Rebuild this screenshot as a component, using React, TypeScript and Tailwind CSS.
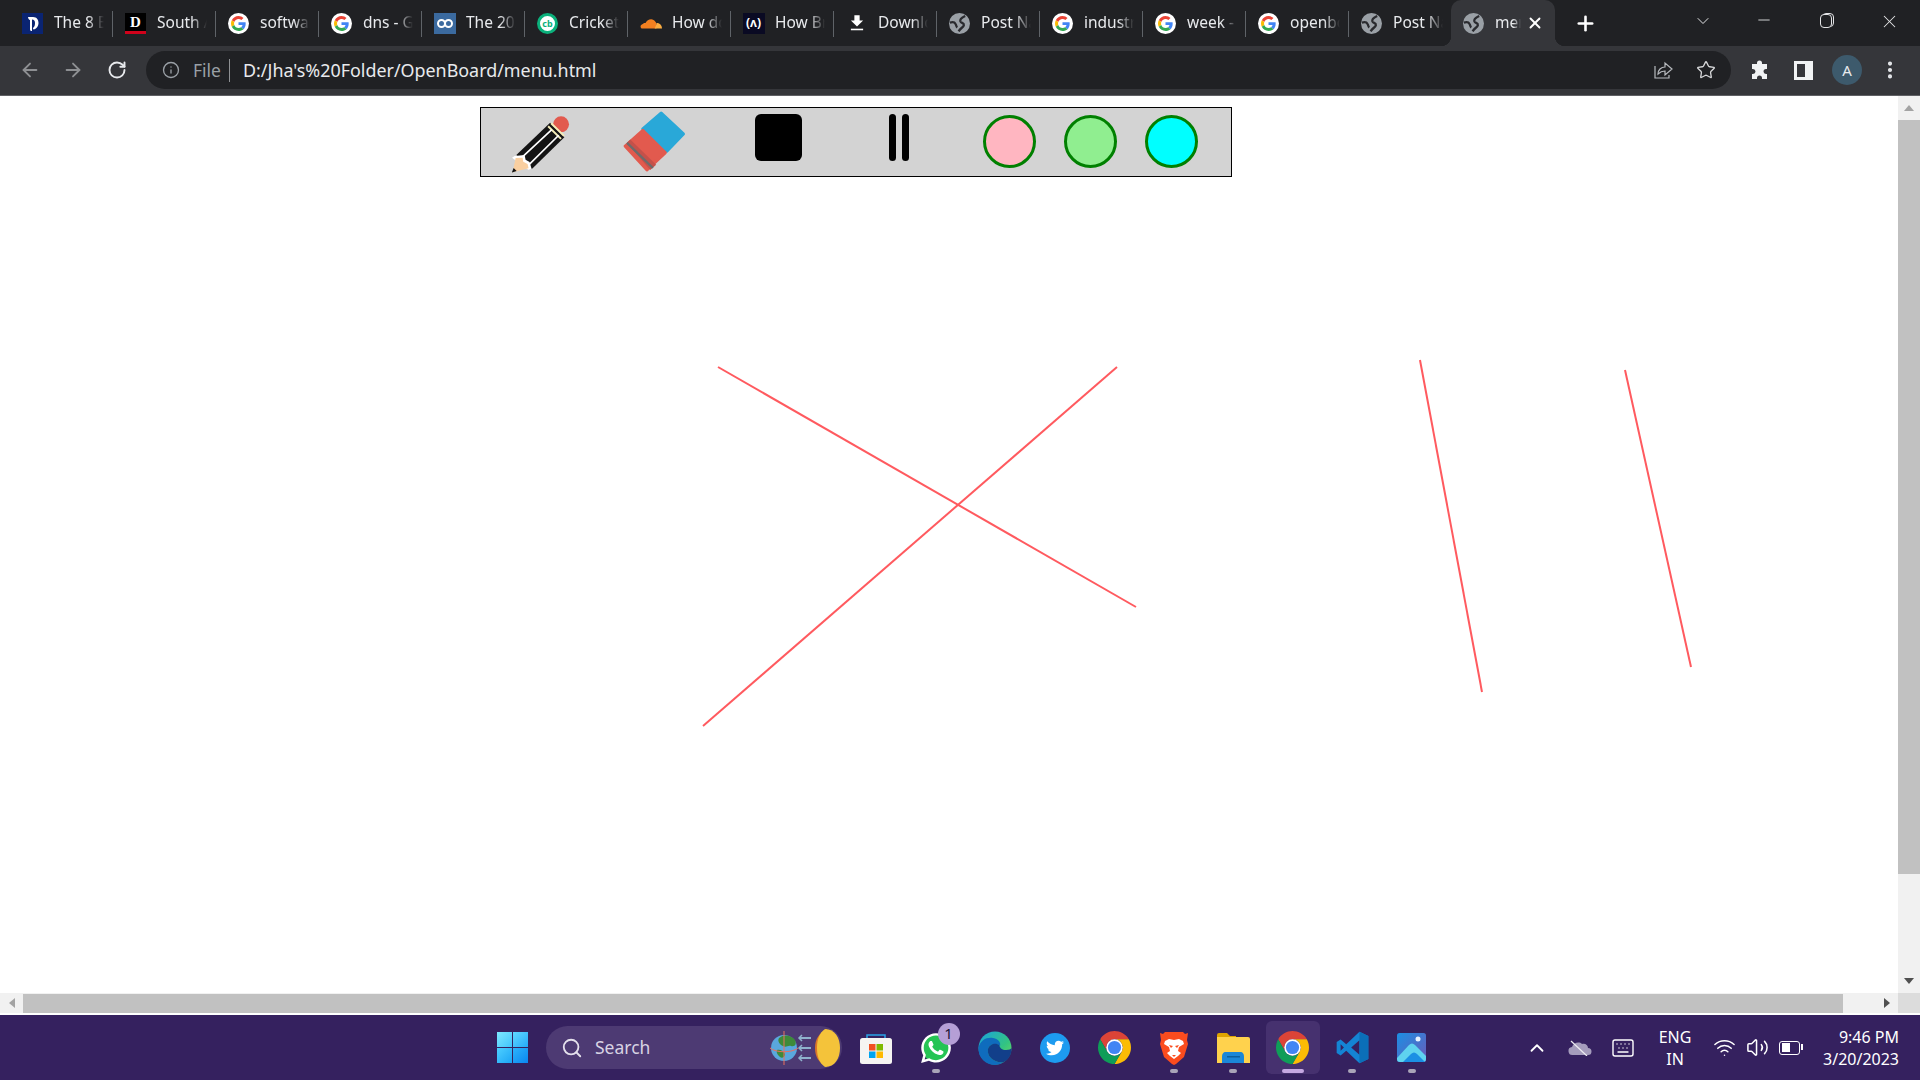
import { ArrowLeft, ArrowRight, RotateCw, Info, Star, EllipsisVertical, Plus, X, ChevronDown, ChevronUp, Minus, Search, Wifi, Volume2, Keyboard } from "lucide-react";
import { FaTwitter, FaWhatsapp } from "react-icons/fa";
import type { ReactNode } from "react";

const font = "font-['Noto_Sans','Open_Sans',sans-serif]";

// favicons
const GoogleIcon = () => (
    <div className="w-[21px] h-[21px] rounded-full bg-white flex items-center justify-center shrink-0">
        <svg viewBox="0 0 48 48" className="w-[15px] h-[15px]">
            <path fill="#EA4335" d="M24 9.5c3.54 0 6.71 1.22 9.21 3.6l6.85-6.85C35.9 2.38 30.47 0 24 0 14.62 0 6.51 5.38 2.56 13.22l7.98 6.19C12.43 13.72 17.74 9.5 24 9.5z" />
            <path fill="#4285F4" d="M46.98 24.55c0-1.57-.15-3.09-.38-4.55H24v9.02h12.94c-.58 2.96-2.26 5.48-4.78 7.18l7.73 6c4.51-4.18 7.09-10.36 7.09-17.65z" />
            <path fill="#FBBC05" d="M10.53 28.59c-.48-1.45-.76-2.99-.76-4.59s.27-3.14.76-4.59l-7.98-6.19C.92 16.46 0 20.12 0 24c0 3.88.92 7.54 2.56 10.78l7.97-6.19z" />
            <path fill="#34A853" d="M24 48c6.48 0 11.93-2.13 16.09-5.81l-7.73-6c-2.15 1.45-4.92 2.3-8.36 2.3-6.26 0-11.57-4.22-13.46-9.91l-7.98 6.19C6.51 42.62 14.62 48 24 48z" />
        </svg>
    </div>
);

const GlobeIcon = () => (
    <svg viewBox="0 0 24 24" className="w-[21px] h-[21px] shrink-0">
        <circle cx="12" cy="12" r="12" fill="#9aa0a6" />
        <path fill="none" stroke="#2a2b2f" strokeWidth="2.600" d="M18.500 3.500c-3 1.500-6.500 3-5.500 6 .8 2.200 4.500 1.500 4 4.500-.4 2.500-4 3-6 7" />
        <path fill="none" stroke="#2a2b2f" strokeWidth="2.600" d="M1 11c3-1 5.500-.5 6.500 1.500 1 1.800.5 3 2 4" />
    </svg>
);

const DevIcon = () => (
    <div className="w-[21px] h-[21px] bg-[#0a2472] flex items-center justify-center shrink-0">
        <svg viewBox="0 0 21 21" className="w-[21px] h-[21px]">
            <path fill="#fff" d="M6 4h5c4 0 5.500 3 5.500 6s-2 6-5 6.500c-.5-.5-.5-1-.5-1.500 1.500-1 2-3 2-5s-1-3.500-3-3.500v11.500c-1 0-2-.5-2-1.500V7c-1 0-2-1.500-2-3z" />
        </svg>
    </div>
);

const SouthIcon = () => (
    <div className="w-[21px] h-[21px] bg-black flex flex-col items-center justify-between shrink-0">
        <span className="text-white text-[15px] leading-[18px] font-bold font-['Liberation_Serif',serif]">D</span>
        <div className="w-full h-[3px] bg-[#d0021b]" />
    </div>
);

const InfinityIcon = () => (
    <div className="w-[22px] h-[21px] bg-[#3b6a9f] flex items-center justify-center shrink-0">
        <svg viewBox="0 0 22 21" className="w-[22px] h-[21px]" fill="none" stroke="#fff" strokeWidth="2">
            <circle cx="7.500" cy="10.500" r="3.500" />
            <circle cx="14.500" cy="10.500" r="3.500" />
        </svg>
    </div>
);

const CricketIcon = () => (
    <div className="w-[21px] h-[21px] rounded-full bg-white border-[3px] border-[#0bb07b] flex items-center justify-center shrink-0">
        <span className="text-[#0bb07b] text-[9px] leading-none font-bold">cb</span>
    </div>
);

const CloudIcon = () => (
    <svg viewBox="0 0 24 14" className="w-[22px] h-[14px] shrink-0">
        <path fill="#f38020" d="M2 13c-2-1-2-4 1-5 1-1 2-1 3-1 2-4 8-6 11-1 1 1 1 3 1 7z" />
        <path fill="#fbad41" d="M18 7c3 0 6 2 6 6h-8c1-2 2-4 2-6z" />
    </svg>
);

const CodeCampIcon = () => (
    <div className="w-[22px] h-[21px] bg-[#0a0a23] flex items-center justify-center shrink-0">
        <span className="text-white text-[12px] leading-none font-bold">(ʌ)</span>
    </div>
);

const DownloadIcon = () => (
    <svg viewBox="0 0 16 18" className="w-[14px] h-[18px] shrink-0" fill="#fff">
        <path d="M5 0h6v6h4l-7 7-7-7h4z" />
        <rect x="1" y="15.500" width="14" height="1.800" />
    </svg>
);

const tabs: { icon: ReactNode; title: string }[] = [
    { icon: <DevIcon />, title: "The 8 Best" },
    { icon: <SouthIcon />, title: "South Africa" },
    { icon: <GoogleIcon />, title: "software" },
    { icon: <GoogleIcon />, title: "dns - Google" },
    { icon: <InfinityIcon />, title: "The 2023" },
    { icon: <CricketIcon />, title: "Cricket" },
    { icon: <CloudIcon />, title: "How do" },
    { icon: <CodeCampIcon />, title: "How Browsers" },
    { icon: <DownloadIcon />, title: "Download" },
    { icon: <GlobeIcon />, title: "Post Name" },
    { icon: <GoogleIcon />, title: "industry" },
    { icon: <GoogleIcon />, title: "week - Google" },
    { icon: <GoogleIcon />, title: "openboard" },
    { icon: <GlobeIcon />, title: "Post Name" },
];

const Tab = ({ icon, title, last }: { icon: ReactNode; title: string; last: boolean }) => (
    <div className="relative w-[103px] h-[46px] flex items-center pl-3 shrink-0">
        <div className="w-[21px] flex justify-center shrink-0">{icon}</div>
        <div className="ml-[11px] w-[50px] overflow-hidden whitespace-nowrap text-[15.500px] text-[#e8eaed] [mask-image:linear-gradient(to_right,black_68%,transparent)]">
            {title}
        </div>
        {!last && <div className="absolute right-0 top-[11px] w-px h-[26px] bg-[#5f6368]" />}
    </div>
);

// toolbar icons
const PencilIcon = () => (
    <svg viewBox="125 62 175 172" className="w-[58px] h-[57px] mt-[4px] shrink-0">
        <circle cx="273" cy="87" r="24" fill="#e25a4e" />
        <path fill="#141414" d="M138 180L240 82L283 126L185 222Z" />
        <path stroke="#f6eeb8" strokeWidth="6" d="M243 84l39 38M234 93l39 38" fill="none" />
        <path stroke="#fff" strokeWidth="5" d="M155 187l90-84M178 207l88-87" fill="none" />
        <path fill="#fff" d="M133 183l30-3 3 14 12 7 6 20-10 3-49-36z" />
        <path fill="#f9cfa0" d="M136 189l21-1 2 12 13 7 3 13-48 12z" />
        <path fill="#111" d="M124 233l6-14 9 9z" />
    </svg>
);

const EraserIcon = () => (
    <svg viewBox="458 46 190 184" className="w-[63px] h-[61px] ml-[53px] mb-[2px] shrink-0">
        <path fill="#29a8d8" stroke="#29a8d8" strokeWidth="10" strokeLinejoin="round" d="M573 53L640 115L590 167L518 100Z" />
        <path fill="#e25a4e" stroke="#e25a4e" strokeWidth="10" strokeLinejoin="round" d="M518 105L585 172L530 223L465 152Z" />
        <path fill="#c4514a" d="M470 142L480 132L558 208L540 224Z" />
        <path stroke="#6b6b6b" strokeWidth="7" d="M470 142L548 218" />
    </svg>
);

const ColorCircle = ({ color, first }: { color: string; first?: boolean }) => (
    <div className={`w-[53px] h-[53px] mb-[2px] rounded-full border-[3px] border-[#008000] shrink-0 ${color} ${first ? "ml-[74px]" : "ml-[28px]"}`} />
);

// taskbar icons
const WindowsLogo = () => (
    <div className="grid grid-cols-2 gap-[1px] w-[31px] h-[31px] shrink-0">
        <div className="bg-gradient-to-br from-[#7de8ff] to-[#3fc5fb]" />
        <div className="bg-gradient-to-br from-[#5fd8ff] to-[#22aaf8]" />
        <div className="bg-gradient-to-br from-[#4ccfff] to-[#19a5f5]" />
        <div className="bg-gradient-to-br from-[#2cb3fb] to-[#0a86f0]" />
    </div>
);

const Doodle = () => (
    <svg viewBox="0 0 72 40" className="w-[72px] h-[40px] shrink-0">
        <circle cx="15" cy="20" r="13" fill="#5aa7dd" />
        <path fill="#3e8a3a" d="M10 10c5-4 12-3 16 2 2 4 0 7-4 6-3-1-5 2-8 0-3-1-6-5-4-8zM8 22c3-1 7 1 8 4 0 3-3 5-5 3-2-2-4-4-3-7z" />
        <path stroke="#e8705f" strokeWidth="1" fill="none" d="M15 3v34M1 20c6 5 22 5 28 0" />
        <path stroke="#8fb1cc" strokeWidth="2" d="M30 10h12M30 20h12M30 30h12" />
        <path stroke="#8fb1cc" strokeWidth="1.500" fill="none" d="M33 7l-3 3 3 3M33 17l-3 3 3 3M33 27l-3 3 3 3" />
        <path fill="#d9762a" d="M58 1c-8 4-12 10-12 19s4 15 12 19z" />
        <path fill="#f4c33a" d="M56 1c10 0 15 9 15 19s-5 19-15 19c-6-4-8-11-8-19s2-15 8-19z" />
    </svg>
);

const StoreIcon = () => (
    <svg viewBox="0 0 32 32" className="w-[32px] h-[32px] shrink-0">
        <path fill="none" stroke="#2aa3e6" strokeWidth="1.500" d="M7 7V3h18v4" />
        <rect y="6" width="32" height="26" rx="2.500" fill="#f6f4f2" />
        <rect x="9" y="12" width="6.500" height="6.500" fill="#f25022" />
        <rect x="16.500" y="12" width="6.500" height="6.500" fill="#7fba00" />
        <rect x="9" y="19.500" width="6.500" height="6.500" fill="#00a4ef" />
        <rect x="16.500" y="19.500" width="6.500" height="6.500" fill="#ffb900" />
    </svg>
);

const EdgeIcon = () => (
    <svg viewBox="0 0 34 34" className="w-[34px] h-[34px]">
        <defs>
            <linearGradient id="edgeTop" x1="0" y1="0" x2="1" y2="1">
                <stop offset="0" stopColor="#1aa3e0" />
                <stop offset="0.6" stopColor="#33c481" />
                <stop offset="1" stopColor="#7bde56" />
            </linearGradient>
        </defs>
        <circle cx="17" cy="17" r="16.500" fill="url(#edgeTop)" />
        <path fill="#0f6cbd" d="M0.500 17C2 9 9 6 15 7c6 1 8 5 7 8-2-2-6-3-9-1-4 2-4 8-1 12 3 4 9 6 14 5-3 2-6 3-9 3C8 34 0 27 .5 17z" />
        <path fill="#123f8a" d="M12 26c-3-4-3-10 1-12 3-2 6-1 8 0 1 3 3 5 7 5 3 0 5-1 5.500-2 .5 6-3 12-7.500 14-5 1-11-1-14-5z" />
    </svg>
);

const ChromeIcon = () => (
    <svg viewBox="4 4 40 40" className="w-[33px] h-[33px]">
        <path fill="#db4437" d="M6.680 14A20 20 0 0 1 41.320 14H24A10 10 0 0 0 15.340 29Z" />
        <path fill="#fbbc05" d="M41.320 14A20 20 0 0 1 24 44L32.660 29A10 10 0 0 0 24 14Z" />
        <path fill="#0f9d58" d="M24 44A20 20 0 0 1 6.680 14L15.340 29A10 10 0 0 0 32.660 29Z" />
        <circle cx="24" cy="24" r="10" fill="#fff" />
        <circle cx="24" cy="24" r="8" fill="#4285f4" />
    </svg>
);

const BraveIcon = () => (
    <svg viewBox="0 0 28 34" className="w-[28px] h-[34px]">
        <path fill="#fb4c1e" d="M5 1h18l2 2 3-1-1 7 1 4-4 13-8 7-2 1-2-1-8-7L0 13l1-4-1-7 3 1z" />
        <path fill="#fff" d="M5 10l4-2 5 1 5-1 4 2 1 3-5 3-1 4 3 2-3 3-4 3-4-3-3-3 3-2-1-4-5-3z" />
        <path fill="#fb4c1e" d="M9 14l4 1-2 2zM19 14l-4 1 2 2zM12 24h4l-2 2z" />
    </svg>
);

const FolderIcon = () => (
    <svg viewBox="0 0 33 30" className="w-[33px] h-[30px]">
        <path fill="#dfa400" d="M0 2a2 2 0 0 1 2-2h8l3 3h6v8H0z" />
        <path fill="#ffd24d" d="M0 4h31a2 2 0 0 1 2 2v24H0z" />
        <path fill="#1b87d8" d="M5 30v-6c0-3 1-5 4-5h14c3 0 4 2 4 5v6z" />
        <rect x="10" y="23" width="13" height="1.500" fill="#0c5f9e" />
    </svg>
);

const VsCodeIcon = () => (
    <svg viewBox="0 0 100 100" className="w-[33px] h-[33px]">
        <path fill="#1484d4" fillRule="evenodd" d="M71 2L98 15V85L71 98L31 60L14 74L2 67V33L14 26L31 40ZM71 28L46 50L71 72ZM14 40V60L24 50Z" />
        <path fill="#0b6fb8" d="M71 2L98 15V85L71 98Z" />
    </svg>
);

const PhotosIcon = () => (
    <svg viewBox="0 0 29 29" className="w-[29px] h-[29px]">
        <defs>
            <linearGradient id="photosBg" x1="0" y1="0" x2="1" y2="1">
                <stop offset="0" stopColor="#1b8fe4" />
                <stop offset="1" stopColor="#6c5bb8" />
            </linearGradient>
        </defs>
        <rect width="29" height="29" rx="2.500" fill="url(#photosBg)" />
        <circle cx="21" cy="6" r="2.500" fill="#e8f4ff" />
        <path fill="#5fd3ef" d="M0 25L12 12c2-2 4-2 6 0l11 11v3a3 3 0 0 1-3 3H3a3 3 0 0 1-3-3z" />
        <path fill="#1b8fe4" d="M6 29l8-8c2-2 4-2 6 0l8 8z" />
    </svg>
);

const Indicator = ({ active }: { active?: boolean }) => (
    <div className={`absolute top-[48px] left-1/2 -translate-x-1/2 h-[4px] rounded-full ${active ? "w-[22px] bg-[#c5a8e2]" : "w-[8px] bg-[#a9a4b8]"}`} />
);

const TaskIcon = ({ children, open, active }: { children: ReactNode; open?: boolean; active?: boolean }) => (
    <div className={`relative w-[54px] h-[53px] mr-[5.500px] flex items-center justify-center shrink-0 rounded-md ${active ? "bg-[#46316f]" : ""}`}>
        {children}
        {(open || active) && <Indicator active={active} />}
    </div>
);

const App = () => {
    return (
        <div className={`w-[1920px] h-[1080px] flex flex-col overflow-hidden bg-white ${font}`}>
            {/* Tab strip */}
            <div className="h-[46px] bg-[#202124] flex pl-[10px] shrink-0">
                {tabs.map((t, i) => (
                    <Tab key={i} icon={t.icon} title={t.title} last={i === tabs.length - 1} />
                ))}
                <div className="relative w-[104px] h-[46px] bg-[#35363a] rounded-t-[10px] flex items-center pl-3 shrink-0 -ml-[1px]">
                    <GlobeIcon />
                    <div className="ml-[11px] w-[26px] overflow-hidden whitespace-nowrap text-[15.500px] text-[#e8eaed] [mask-image:linear-gradient(to_right,black_70%,transparent)]">menu.html</div>
                    <X size={18} strokeWidth={2.500} className="text-white ml-[5px]" />
                    <div className="absolute -left-[10px] bottom-0 w-[10px] h-[10px] bg-[radial-gradient(circle_at_0_0,#202124_10px,#35363a_10.500px)]" />
                    <div className="absolute -right-[10px] bottom-0 w-[10px] h-[10px] bg-[radial-gradient(circle_at_100%_0,#202124_10px,#35363a_10.500px)]" />
                </div>
                <Plus size={23} strokeWidth={2.700} className="text-white ml-[19px] mt-[12px]" />
                <div className="ml-auto flex items-start pt-[11px] text-[#e3e4e6]">
                    <div className="w-[62px] flex justify-center"><ChevronDown size={20} strokeWidth={1.200} /></div>
                    <div className="w-[62px] flex justify-center"><Minus size={18} strokeWidth={1.200} className="-ml-[2px]" /></div>
                    <div className="w-[62px] flex justify-center mt-[3px] relative">
                        <div className="w-[12px] h-[14px] rounded-sm border border-[#e3e4e6] bg-[#202124] relative z-10" />
                        <div className="w-[12px] h-[14px] rounded-sm border border-[#e3e4e6] -ml-[10px] -mt-[1px]" />
                    </div>
                    <div className="w-[62px] flex justify-center"><X size={21} strokeWidth={1.200} /></div>
                </div>
            </div>

            {/* Address bar */}
            <div className="h-[50px] bg-[#35363a] border-b border-[#5f6064] flex items-center shrink-0 pb-[1px]">
                <ArrowLeft size={22} strokeWidth={2} className="text-[#8e9093] ml-[19px]" />
                <ArrowRight size={22} strokeWidth={2} className="text-[#8e9093] ml-[21px]" />
                <RotateCw size={20} strokeWidth={2.300} className="text-[#e8eaed] ml-[23px]" />
                <div className="ml-[19px] w-[1585px] h-[38px] rounded-full bg-[#202124] flex items-center text-[17.500px] shrink-0">
                    <Info size={18} strokeWidth={1.800} className="text-[#9aa0a6] ml-[16px]" />
                    <span className="text-[#9aa0a6] ml-[13px]">File</span>
                    <div className="w-px h-[23px] bg-[#8e9093] ml-[8px]" />
                    <span className="text-[#e8eaed] ml-[13px] text-[17.900px]">D:/Jha's%20Folder/OpenBoard/menu.html</span>
                    <div className="ml-auto flex items-center mr-[15px] text-[#b8bbbf]">
                        <svg viewBox="0 0 20 20" className="w-[20px] h-[20px]" fill="none" stroke="currentColor" strokeWidth="1.200">
                            <path d="M2 6v12h14v-3" />
                            <path d="M5 14c0-4 3-7 7-7V3l7 6-7 6v-4c-3 0-5 1-7 3z" />
                        </svg>
                        <Star size={20} strokeWidth={1.600} className="text-[#d6d7d9] ml-[23px]" />
                    </div>
                </div>
                <svg viewBox="0 0 20 20" className="w-[20px] h-[20px] ml-[19px]" fill="#f1f3f4">
                    <path d="M7 3a2.500 2.500 0 0 1 5 0v1h5v5h-1a2.500 2.500 0 0 0 0 5h1v5h-5v-1a2.500 2.500 0 0 0-5 0v1H2v-5h1a2.500 2.500 0 0 0 0-5H2V4h5z" />
                </svg>
                <div className="w-[19px] h-[19px] border-[3px] border-[#f1f3f4] border-r-[8px] ml-[24px]" />
                <div className="w-[30px] h-[30px] rounded-full bg-[#3d5a6c] flex items-center justify-center text-[#e8eaed] text-[15px] ml-[19px]">A</div>
                <EllipsisVertical size={22} strokeWidth={2.500} className="text-[#e8eaed] ml-[17px]" />
            </div>

            {/* Page */}
            <div className="flex-1 flex min-h-0">
                <div className="flex-1 relative bg-white">
                    <div className="ml-[480px] mt-[11px] w-[752px] h-[70px] border border-black bg-[#d3d3d3] flex items-center pl-[31px]">
                        <PencilIcon />
                        <EraserIcon />
                        <div className="w-[47px] h-[47px] rounded-[6px] bg-black ml-[69px] mb-[9px] shrink-0" />
                        <div className="flex gap-[6px] ml-[87px] mb-[9px] shrink-0">
                            <div className="w-[7px] h-[47px] rounded-full bg-black" />
                            <div className="w-[7px] h-[47px] rounded-full bg-black" />
                        </div>
                        <ColorCircle color="bg-[#ffb6c1]" first />
                        <ColorCircle color="bg-[#90ee90]" />
                        <ColorCircle color="bg-[#00ffff]" />
                    </div>
                    {/* canvas strokes, offset from y=96 */}
                    <svg className="absolute inset-0 w-full h-full pointer-events-none" fill="none" stroke="#ff5a5f" strokeWidth="2">
                        <line x1="718" y1="271" x2="1136" y2="511" />
                        <line x1="1117" y1="271" x2="703" y2="630" />
                        <line x1="1420" y1="264" x2="1482" y2="596" />
                        <line x1="1625" y1="274" x2="1691" y2="571" />
                    </svg>
                </div>
                <div className="w-[22px] bg-[#f1f1f1] flex flex-col items-center">
                    <div className="h-[24px] flex items-center justify-center">
                        <div className="w-0 h-0 border-x-[5px] border-x-transparent border-b-[6px] border-b-[#a3a3a3]" />
                    </div>
                    <div className="w-full h-[754px] bg-[#c1c1c1]" />
                    <div className="flex-1 flex items-end justify-center pb-[9px]">
                        <div className="w-0 h-0 border-x-[5px] border-x-transparent border-t-[6px] border-t-[#505050]" />
                    </div>
                </div>
            </div>

            {/* Horizontal scrollbar */}
            <div className="h-[22px] flex shrink-0 bg-[#f1f1f1] border-b-2 border-white">
                <div className="w-[23px] flex items-center justify-center">
                    <div className="w-0 h-0 border-y-[5px] border-y-transparent border-r-[6px] border-r-[#a3a3a3]" />
                </div>
                <div className="w-[1820px] bg-[#c1c1c1] mt-[1px]" />
                <div className="flex-1 flex items-center justify-end pr-[8px]">
                    <div className="w-0 h-0 border-y-[5px] border-y-transparent border-l-[6px] border-l-[#505050]" />
                </div>
                <div className="w-[22px] bg-[#dcdcdc]" />
            </div>

            {/* Taskbar */}
            <div className="h-[65px] bg-[#35215f] flex items-center shrink-0 text-white">
                <div className="ml-[497px]"><WindowsLogo /></div>
                <div className="ml-[18px] w-[296px] h-[43px] rounded-full bg-[#4d3a73] flex items-center shrink-0">
                    <Search size={22} strokeWidth={2} className="text-[#e4e0ec] ml-[15px]" />
                    <span className="text-[17.500px] text-[#d8d3e3] ml-[12px]">Search</span>
                    <div className="ml-auto mr-[1px]"><Doodle /></div>
                </div>
                <div className="ml-[7px] flex items-center">
                    <TaskIcon><StoreIcon /></TaskIcon>
                    <TaskIcon open>
                        <div className="relative w-[34px] h-[34px] flex items-center justify-center">
                            <div className="absolute inset-[3px] rounded-full bg-[#25c454]" />
                            <FaWhatsapp size={34} className="relative text-white" />
                            <div className="absolute -top-[8px] -right-[7px] w-[22px] h-[22px] rounded-full bg-[#b59fd6] text-[#1d1436] text-[15px] flex items-center justify-center">1</div>
                        </div>
                    </TaskIcon>
                    <TaskIcon><EdgeIcon /></TaskIcon>
                    <TaskIcon>
                        <div className="w-[30px] h-[30px] rounded-full bg-[#1d9bf0] flex items-center justify-center">
                            <FaTwitter size={18} className="text-white" />
                        </div>
                    </TaskIcon>
                    <TaskIcon><ChromeIcon /></TaskIcon>
                    <TaskIcon open><BraveIcon /></TaskIcon>
                    <TaskIcon open><FolderIcon /></TaskIcon>
                    <TaskIcon active><ChromeIcon /></TaskIcon>
                    <TaskIcon open><VsCodeIcon /></TaskIcon>
                    <TaskIcon open><PhotosIcon /></TaskIcon>
                </div>
                <div className="ml-auto flex items-center pr-[21px]">
                    <ChevronUp size={22} strokeWidth={2} />
                    <svg viewBox="0 0 24 16" className="w-[24px] h-[16px] ml-[20px]">
                        <path fill="#a59cbc" d="M5 15a4 4 0 0 1-1-8c1-4 7-6 10-3 3-1 6 1 6 4a3.500 3.500 0 0 1 0 7z" />
                        <path stroke="#efedf3" strokeWidth="1.200" d="M3 1l16 15" />
                    </svg>
                    <Keyboard size={24} strokeWidth={1.400} className="ml-[19px]" />
                    <div className="w-[50px] ml-[15px] text-center text-[16px] leading-[22px]">
                        <div>ENG</div>
                        <div>IN</div>
                    </div>
                    <Wifi size={23} strokeWidth={1.600} className="ml-[13px]" />
                    <Volume2 size={23} strokeWidth={1.600} className="ml-[10px]" />
                    <div className="ml-[10px] w-[21px] h-[14px] rounded-[3px] border-[1.500px] border-white p-[1.500px] relative">
                        <div className="w-[8px] h-full bg-white" />
                        <div className="absolute -right-[4px] top-[2px] w-[2px] h-[6px] bg-white" />
                    </div>
                    <div className="ml-[23px] text-right text-[16px] leading-[22px]">
                        <div>9:46 PM</div>
                        <div>3/20/2023</div>
                    </div>
                </div>
            </div>
        </div>
    );
};

export default App;
